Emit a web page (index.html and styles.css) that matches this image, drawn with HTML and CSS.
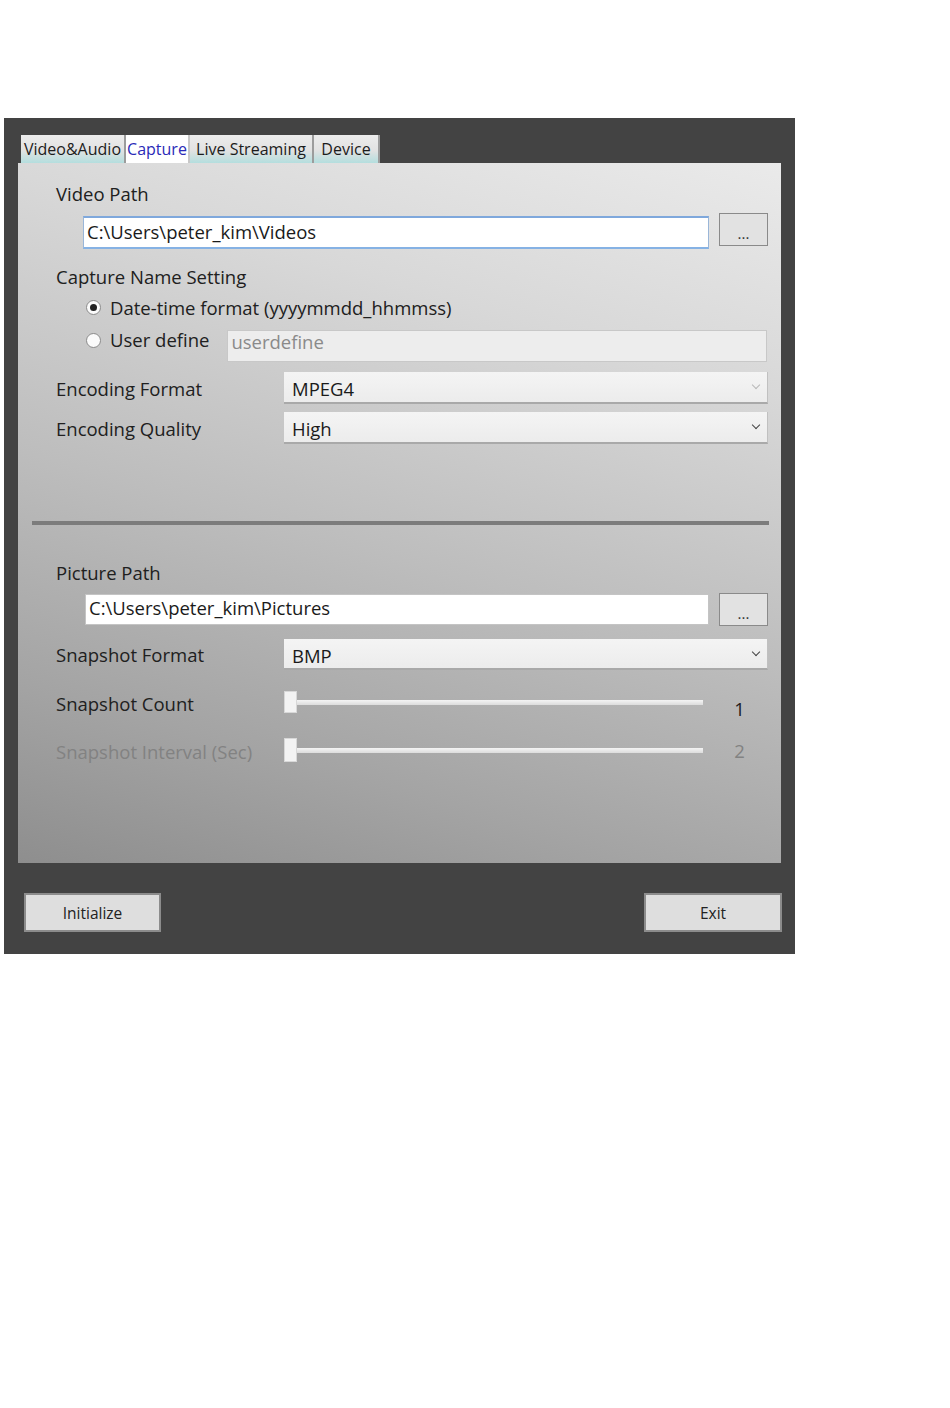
FILE: index.html
```html
<!DOCTYPE html>
<html lang="en">
<head>
    <meta charset="UTF-8">
    <title>Capture settings</title>
    <link rel="stylesheet" href="styles.css">
</head>
<body>

    <div class="window">
        <!-- Tab strip -->
        <div class="tabs">
            <div class="tab">Video&amp;Audio</div>
            <div class="tab active">Capture</div>
            <div class="tab">Live Streaming</div>
            <div class="tab">Device</div>
        </div>

        <div class="panel">
            <!-- Video -->
            <p class="label">Video Path</p>
            <div class="path-row">
                <div class="textbox focused">C:\Users\peter_kim\Videos</div>
                <div class="browse">...</div>
            </div>

            <p class="label name-title">Capture Name Setting</p>
            <div class="radio-row first">
                <span class="radio checked"></span><span>Date-time format (yyyymmdd_hhmmss)</span>
            </div>
            <div class="radio-row second">
                <span class="radio"></span><span class="radio-text">User define</span>
                <div class="textbox disabled">userdefine</div>
            </div>

            <div class="field-row enc-format">
                <p class="field-label">Encoding Format</p>
                <div class="combo disabled">MPEG4<span class="chevron"></span></div>
            </div>
            <div class="field-row enc-quality">
                <p class="field-label">Encoding Quality</p>
                <div class="combo">High<span class="chevron"></span></div>
            </div>

            <div class="separator"></div>

            <!-- Picture -->
            <p class="label picture-title">Picture Path</p>
            <div class="path-row picture">
                <div class="textbox">C:\Users\peter_kim\Pictures</div>
                <div class="browse">...</div>
            </div>

            <div class="field-row snap-format">
                <p class="field-label">Snapshot Format</p>
                <div class="combo">BMP<span class="chevron"></span></div>
            </div>

            <div class="slider-row snap-count">
                <p class="field-label">Snapshot Count</p>
                <div class="slider"><span class="thumb"></span><span class="track"></span></div>
                <span class="value">1</span>
            </div>
            <div class="slider-row snap-interval off">
                <p class="field-label">Snapshot Interval (Sec)</p>
                <div class="slider"><span class="thumb"></span><span class="track"></span></div>
                <span class="value">2</span>
            </div>
        </div>

        <div class="footer">
            <div class="button">Initialize</div>
            <div class="button">Exit</div>
        </div>
    </div>

</body>
</html>
```

FILE: styles.css
```css
body {
    margin: 0;
    background-color: #ffffff;
    font-family: "Open Sans", "Noto Sans", sans-serif;
    color: #202020;
}

p {
    margin: 0;
}

/* Window frame */
.window {
    margin: 118px 0 0 4px;
    width: 791px;
    height: 836px;
    background-color: #434343;
    box-sizing: border-box;
    padding-top: 17px;
}

/* Tabs */
.tabs {
    display: flex;
    height: 28px;
    padding-left: 17px;
}

.tab {
    height: 28px;
    line-height: 29px;
    font-size: 16px;
    text-align: center;
    color: #1c1c1c;
    background: linear-gradient(to bottom, #ececec 0%, #e2e2e2 55%, #b4dede 100%);
    border-right: 2px solid #9c9c9c;
    box-sizing: border-box;
}

.tab:nth-child(1) { width: 105px; }
.tab:nth-child(2) { width: 64px; }
.tab:nth-child(3) { width: 124px; }
.tab:nth-child(4) { width: 66px; }

.tab.active {
    background: #ffffff;
    color: #2a2ab8;
    border-right: 2px solid #c8c8c8;
}

/* Main panel */
.panel {
    margin: 0 14px;
    height: 700px;
    box-sizing: border-box;
    padding: 14px 0 0 38px;
    background: linear-gradient(196deg, #eaeaea 0%, #d8d8d8 25%, #bdbdbd 55%, #a4a4a4 80%, #8e8e8e 100%);
    font-size: 18.5px;
}

.label {
    height: 34px;
    line-height: 34px;
}

.name-title { margin-top: 11px; }
.picture-title { margin-top: 31px; }

.path-row {
    display: flex;
    margin: 2px 0 0 27px;
    height: 36px;
}

.path-row.picture {
    margin-left: 29px;
    margin-top: 3px;
    height: 33px;
}

.textbox {
    box-sizing: border-box;
    background: #ffffff;
    border: 1px solid #c4c4c4;
    padding-left: 3px;
    height: 33px;
    line-height: 27px;
    color: #1a1a1a;
}

.path-row .textbox {
    width: 626px;
    margin-top: 3px;
}

.path-row.picture .textbox {
    width: 624px;
    height: 31px;
    line-height: 25px;
    margin-top: 1px;
}

.textbox.focused {
    border: 1px solid #9ab6d8;
    border-top: 2px solid #7fa8dc;
    border-bottom: 2px solid #86b2e4;
}

.textbox.disabled {
    flex: 1;
    height: 32px;
    line-height: 22px;
    margin-top: 6px;
    margin-left: 18px;
    background: #ededed;
    border-color: #c8c8c8;
    color: #8a8a8a;
}

.browse {
    width: 49px;
    height: 33px;
    margin-left: 10px;
    box-sizing: border-box;
    background: #e2e2e2;
    border: 1px solid #8a8a8a;
    font-size: 15px;
    line-height: 38px;
    text-align: center;
    color: #333333;
}

/* Radios */
.radio-row {
    display: flex;
    align-items: center;
    margin-left: 30px;
}

.radio-row.first {
    height: 26px;
}

.radio-row.second {
    width: 681px;
    height: 38px;
    align-items: flex-start;
    margin-top: 4px;
}

.radio-row.second > span {
    line-height: 32px;
}

.radio {
    box-sizing: border-box;
    width: 15px;
    height: 15px;
    margin-right: 9px;
    border-radius: 50%;
    background: #fbfbfb;
    border: 1px solid #8a8a8a;
    position: relative;
}

.radio-row.second .radio {
    margin-top: 9px;
}

.radio.checked::after {
    content: "";
    position: absolute;
    left: 3px;
    top: 3px;
    width: 7px;
    height: 7px;
    border-radius: 50%;
    background: #222222;
}

/* Label + control rows */
.field-row {
    display: flex;
    align-items: center;
    height: 32px;
}

.field-label {
    width: 228px;
}

.enc-format { margin-top: 10px; }
.enc-quality { margin-top: 8px; }
.snap-format { margin-top: 13px; height: 31px; }

.combo {
    position: relative;
    box-sizing: border-box;
    width: 484px;
    height: 100%;
    padding-left: 8px;
    line-height: 34px;
    background: linear-gradient(to bottom, #f4f4f4, #ececec);
    border-bottom: 2px solid #a9a9a9;
    border-right: 1px solid #c0c0c0;
    color: #1a1a1a;
}

.chevron {
    position: absolute;
    right: 8px;
    top: 10px;
    width: 5px;
    height: 5px;
    border-right: 1.5px solid #444444;
    border-bottom: 1.5px solid #444444;
    transform: rotate(45deg);
}

.combo.disabled .chevron {
    border-color: #b8b8b8;
}

.separator {
    margin: 77px 0 0 -24px;
    width: 737px;
    height: 4px;
    background: #7c7c7c;
}

/* Sliders */
.slider-row {
    display: flex;
    align-items: center;
    height: 22px;
    margin-top: 21px;
}

.slider-row.snap-interval {
    height: 24px;
    margin-top: 25px;
}

.slider-row .field-label {
    position: relative;
    top: 1px;
}

.slider {
    display: flex;
    align-items: center;
    width: 419px;
    height: 100%;
}

.thumb {
    width: 13px;
    height: 100%;
    background: #f3f3f3;
    border: 1px solid #d8d8d8;
    box-sizing: border-box;
}

.track {
    flex: 1;
    height: 5px;
    background: linear-gradient(to bottom, #f4f4f4, #dcdcdc);
}

.value {
    width: 37px;
    margin-left: 18px;
    text-align: center;
    position: relative;
    top: 6px;
}

.snap-interval .value {
    top: 0;
}

.off {
    color: #828282;
}

/* Bottom buttons */
.footer {
    display: flex;
    justify-content: space-between;
    padding: 30px 13px 0 20px;
}

.button {
    box-sizing: border-box;
    width: 137px;
    height: 39px;
    line-height: 37px;
    text-align: center;
    font-size: 15.5px;
    color: #222222;
    background: #dedede;
    border: 2px solid #8c8c8c;
}

.footer .button:last-child {
    width: 138px;
}
```
